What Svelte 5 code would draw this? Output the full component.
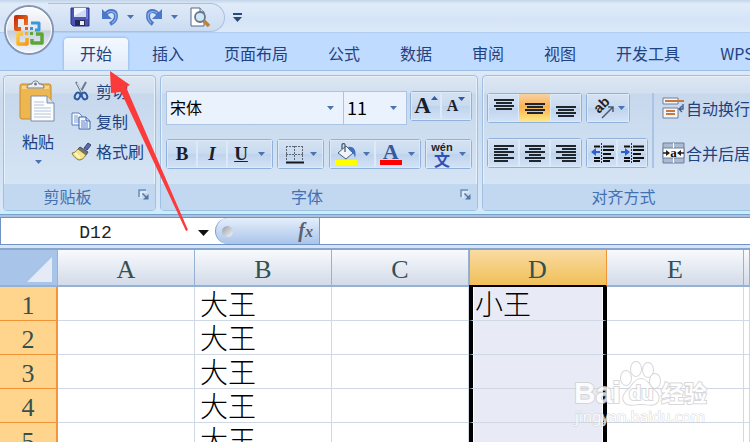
<script>
    let tabs = ["开始", "插入", "页面布局", "公式", "数据", "审阅", "视图", "开发工具", "WPS 云办公"]
    let activeTab = $state("开始")

    let columns = ["A", "B", "C", "D", "E"]
    let rows = [1, 2, 3, 4, 5]
    let cells = { B1: "大王", B2: "大王", B3: "大王", B4: "大王", B5: "大王", D1: "小王" }

    let cellName = $state("D12")
    let formula = $state("")
    let fontName = $state("宋体")
    let fontSize = $state("11")
    let vertical = $state("middle")
</script>

{#snippet arrow()}
    <svg class="arrow" width="7" height="4" viewBox="0 0 7 4" aria-hidden="true"><path d="M0 0h7L3.500 4z" fill="currentColor" /></svg>
{/snippet}

{#snippet launcher()}
    <button class="launcher" aria-label="更多选项">
        <svg width="11" height="11" viewBox="0 0 11 11">
            <path d="M1 8V1h7" fill="none" stroke="#6b8fb8" stroke-width="1.500" />
            <path d="M3 9V3h6" fill="none" stroke="#f4faff" />
            <path d="M4.500 4.500l4 4" stroke="#55779f" stroke-width="1.500" />
            <path d="M10.500 5v5.500H5z" fill="#55779f" />
        </svg>
    </button>
{/snippet}

{#snippet lines(d)}
    <svg width="20" height="18" viewBox="0 0 20 18" aria-hidden="true"><path {d} fill="none" stroke="#20262e" stroke-width="2" /></svg>
{/snippet}

<div class="app">
    <header>
        <div class="titlebar">
            <div class="quick">
                <button aria-label="保存">
                    <svg width="20" height="20" viewBox="0 0 20 20">
                        <path d="M1 1h18v18H3l-2-2z" fill="#4a55b5" stroke="#2b3384" />
                        <path d="M4 1h12v9H4z" fill="#f3f7ff" />
                        <path d="M4 9l12-7v8H4z" fill="#cfdcf5" />
                        <path d="M5 13h10v6H5z" fill="#252a50" />
                        <path d="M10 14h4v4h-4z" fill="#e9eefa" />
                        <path d="M17 2v10" stroke="#8f9be8" />
                    </svg>
                </button>
                <button aria-label="撤消">
                    <svg width="18" height="18" viewBox="0 0 18 18">
                        <path d="M4 7C8 1 15 2 15 8c0 4-2 6-6 8" fill="none" stroke="#4b78c8" stroke-width="4" />
                        <path d="M1 1v10h10z" fill="#4b78c8" />
                        <path d="M6 5c4-3 9-1 9 3 0 3-1 5-4 7" fill="none" stroke="#8fb2e8" stroke-width="1.200" />
                    </svg>
                    {@render arrow()}
                </button>
                <button aria-label="恢复">
                    <svg width="18" height="18" viewBox="0 0 18 18">
                        <path d="M14 7C9 1 3 2 3 8c0 4 2 6 5 8" fill="none" stroke="#4b78c8" stroke-width="4" />
                        <path d="M17 1v10H7z" fill="#4b78c8" />
                        <path d="M12 5C8 2 3 4 3 8c0 3 1 5 3 7" fill="none" stroke="#8fb2e8" stroke-width="1.200" />
                    </svg>
                    {@render arrow()}
                </button>
                <button aria-label="打印预览">
                    <svg width="21" height="21" viewBox="0 0 21 21">
                        <path d="M2 1h9l4 4v14H2z" fill="#fff" stroke="#5b6980" />
                        <path d="M11 1v4h4" fill="#d5dfed" stroke="#5b6980" />
                        <circle cx="11" cy="10" r="5" fill="#cfe6f7" stroke="#66788e" stroke-width="1.800" />
                        <path d="M15 14l5 5" stroke="#c18228" stroke-width="3.500" />
                    </svg>
                </button>
            </div>
            <button class="customize" aria-label="自定义快速访问工具栏">
                <svg width="9" height="9" viewBox="0 0 9 9"><path d="M0 1h9" stroke="#2a4a7d" stroke-width="2" /><path d="M0 4h9L4.500 9z" fill="#2a4a7d" /></svg>
            </button>
        </div>
        <button class="office" aria-label="Office 按钮">
            <svg width="52" height="52" viewBox="0 0 52 52">
                <defs>
                    <linearGradient id="orb" x1="0" y1="0" x2="0" y2="1">
                        <stop offset="0" stop-color="#fdfdfe" />
                        <stop offset="0.500" stop-color="#e1e6ee" />
                        <stop offset="0.520" stop-color="#c3cede" />
                        <stop offset="1" stop-color="#f6faff" />
                    </linearGradient>
                    <linearGradient id="red" x1="0" y1="0" x2="1" y2="1"><stop offset="0" stop-color="#c52f0b" /><stop offset="1" stop-color="#f47a1e" /></linearGradient>
                    <linearGradient id="yellow" x1="0" y1="0" x2="1" y2="1"><stop offset="0" stop-color="#ffca3a" /><stop offset="1" stop-color="#f39a1a" /></linearGradient>
                </defs>
                <circle cx="26" cy="26" r="24" fill="url(#orb)" stroke="#8496b2" stroke-width="2" />
                <circle cx="26" cy="26" r="22.500" fill="none" stroke="#fff" />
                <path d="M18 25h-5V13h10v8" fill="none" stroke="url(#red)" stroke-width="4" stroke-linejoin="round" />
                <path d="M28 19h8v7h-4" fill="none" stroke="#3a98d8" stroke-width="3" stroke-linejoin="round" />
                <path d="M20 30h-5v10h9v-6" fill="none" stroke="url(#yellow)" stroke-width="3.500" stroke-linejoin="round" />
                <path d="M29 35v4h10v-9h-6" fill="none" stroke="#5ea537" stroke-width="3.500" stroke-linejoin="round" />
                <path d="M22 23h3v3h-3z" fill="#ea5a16" />
                <path d="M27 23h3v3h-3z" fill="#3a98d8" />
                <path d="M22 28h3v3h-3z" fill="#f7ad22" />
                <path d="M27 28h3v3h-3z" fill="#5ea537" />
            </svg>
        </button>
        <nav>
            {#each tabs as tab}
                <button class="tab" class:active={tab === activeTab} onclick={() => (activeTab = tab)}>{tab}</button>
            {/each}
        </nav>
    </header>

    <div class="ribbon">
        <section class="group clipboard">
            <div class="body">
                <button class="paste">
                    <svg width="38" height="42" viewBox="0 0 38 42" aria-hidden="true">
                        <rect x="1" y="4" width="31" height="35" rx="2" fill="#eeb64e" stroke="#c48a2c" />
                        <path d="M3 6h27v3H3z" fill="#f9d48a" />
                        <path d="M8 8c0-3 2-4 5-4 0-4 7-4 7 0 3 0 5 1 5 4z" fill="#eceff3" stroke="#737d8b" />
                        <circle cx="16.500" cy="4" r="1.500" fill="#737d8b" />
                        <path d="M12 16h16l7 7v18H12z" fill="#fbfdff" stroke="#7a8ca6" />
                        <path d="M28 16v7h7" fill="#d4deec" stroke="#7a8ca6" />
                        <path d="M15 22h10M15 25h10M15 28h17M15 31h17M15 34h17M15 37h17" stroke="#b5c4da" />
                    </svg>
                    <span>粘贴</span>
                    {@render arrow()}
                </button>
                <div class="stack">
                    <button>
                        <svg width="20" height="20" viewBox="0 0 20 20" aria-hidden="true">
                            <path d="M5 1l6 11M15 1L9 12" stroke="#6c7a8d" stroke-width="2" />
                            <path d="M6 2l5 9" stroke="#e4eaf2" />
                            <ellipse cx="6.500" cy="15" rx="2.500" ry="3.500" fill="none" stroke="#2e58a6" stroke-width="2" transform="rotate(25 6.500 15)" />
                            <ellipse cx="13.500" cy="15" rx="2.500" ry="3.500" fill="none" stroke="#2e58a6" stroke-width="2" transform="rotate(-25 13.500 15)" />
                        </svg>
                        剪切
                    </button>
                    <button>
                        <svg width="20" height="20" viewBox="0 0 20 20" aria-hidden="true">
                            <path d="M1 2h7l3 3v9H1z" fill="#f5f9ff" stroke="#5f7fb8" />
                            <path d="M3 5h4M3 7h5M3 9h5M3 11h5" stroke="#7f9fd2" />
                            <path d="M8 6h7l4 4v8H8z" fill="#f0f6ff" stroke="#3f63a8" />
                            <path d="M15 6v4h4" fill="#bcd1f0" stroke="#3f63a8" />
                            <path d="M10 10h4M10 12h7M10 14h7M10 16h7" stroke="#5f86c8" />
                        </svg>
                        复制
                    </button>
                    <button>
                        <svg width="20" height="20" viewBox="0 0 20 20" aria-hidden="true">
                            <path d="M13 7l4-5 3 2-4 5z" fill="#5b6aa8" stroke="#39456e" />
                            <path d="M9 6l8 5-2 3-8-6z" fill="#6d7585" stroke="#454e5e" />
                            <path d="M7 8l8 6c-2 3-4 5-7 5-3-1-6-4-7-7 3 0 4-2 6-4z" fill="#f6e48c" stroke="#8c7b34" />
                            <path d="M4 12l5 5" stroke="#fff8c9" stroke-width="2" />
                        </svg>
                        格式刷
                    </button>
                </div>
            </div>
            <footer><h2>剪贴板</h2>{@render launcher()}</footer>
        </section>

        <section class="group font">
            <div class="body">
                <div class="row">
                    <div class="combos">
                        <label class="combo name">
                            <select bind:value={fontName} aria-label="字体"><option>宋体</option><option>黑体</option></select>
                            {@render arrow()}
                        </label>
                        <label class="combo size">
                            <select bind:value={fontSize} aria-label="字号"><option>11</option><option>12</option></select>
                            {@render arrow()}
                        </label>
                    </div>
                    <div class="buttons">
                        <button class="w30 letter" aria-label="增大字号"><span class="big">A</span><svg width="7" height="20" viewBox="0 0 7 20"><path d="M0 4l3.500-4L7 4z" fill="#3159a5" /></svg></button>
                        <button class="w30 letter" aria-label="减小字号"><span>A</span><svg width="7" height="20" viewBox="0 0 7 20"><path d="M0 1h7L3.500 5z" fill="#3159a5" /></svg></button>
                    </div>
                </div>
                <div class="row">
                    <div class="buttons">
                        <button class="w30 letter"><b>B</b></button>
                        <button class="w30 letter"><i>I</i></button>
                        <button class="w46 letter"><u>U</u>{@render arrow()}</button>
                    </div>
                    <div class="buttons">
                        <button class="w46" aria-label="边框">
                            <svg width="19" height="19" viewBox="0 0 19 19"><path d="M1 1.500h17M1 9.500h17M1.500 1v15M9.500 1v15M17.500 1v15" stroke="#5c6675" stroke-dasharray="2 1" /><path d="M1 17.500h18" stroke="#14181e" stroke-width="2" /></svg>
                            {@render arrow()}
                        </button>
                    </div>
                    <div class="buttons">
                        <button class="w46" aria-label="填充颜色">
                            <svg width="22" height="22" viewBox="0 0 22 22">
                                <path d="M3 10l8-7 7 7-7 6z" fill="#eef4fb" stroke="#4c5d75" />
                                <path d="M10 9V2c0-2-3-2-3 0v4" fill="none" stroke="#4c5d75" stroke-width="1.300" />
                                <path d="M13 4c6-1 9 4 7 11-1-4-2-6-5-7z" fill="#3c6fc0" />
                                <path d="M0 17h22v5H0z" fill="#ffff00" />
                            </svg>
                            {@render arrow()}
                        </button>
                        <button class="w46" aria-label="字体颜色">
                            <span class="color">A</span>
                            {@render arrow()}
                        </button>
                    </div>
                    <div class="buttons">
                        <button class="w46" aria-label="拼音指南">
                            <span class="pinyin"><span>wén</span><span>文</span></span>
                            {@render arrow()}
                        </button>
                    </div>
                </div>
            </div>
            <footer><h2>字体</h2>{@render launcher()}</footer>
        </section>

        <section class="group align">
            <div class="body">
                <div class="side">
                    <div class="row">
                        <div class="buttons">
                            <button class="w31" class:on={vertical === "top"} aria-label="顶端对齐" onclick={() => (vertical = "top")}>{@render lines("M0 1h20M2 4h16M0 7h20M2 10h16")}</button>
                            <button class="w31" class:on={vertical === "middle"} aria-label="垂直居中" onclick={() => (vertical = "middle")}>{@render lines("M0 5h20M2 8h16M0 11h20M2 14h16")}</button>
                            <button class="w31" class:on={vertical === "bottom"} aria-label="底端对齐" onclick={() => (vertical = "bottom")}>{@render lines("M0 8h20M2 11h16M0 14h20M2 17h16")}</button>
                        </div>
                        <div class="buttons">
                            <button class="w42" aria-label="方向">
                                <svg width="24" height="24" viewBox="0 0 24 24"><text x="7" y="18" transform="rotate(-45 7 18)" font-family="Liberation Sans" font-weight="bold" font-size="14" fill="#222">ab</text><path d="M10 22L21 11M21 16v-5h-5" fill="none" stroke="#4d5b70" stroke-width="1.500" /></svg>
                                {@render arrow()}
                            </button>
                        </div>
                    </div>
                    <div class="row">
                        <div class="buttons">
                            <button class="w31" aria-label="文本左对齐">{@render lines("M0 2h20M0 5h14M0 8h20M0 11h14M0 14h20M0 17h14")}</button>
                            <button class="w31" aria-label="居中">{@render lines("M0 2h20M4 5h12M0 8h20M4 11h12M0 14h20M4 17h12")}</button>
                            <button class="w31" aria-label="文本右对齐">{@render lines("M0 2h20M6 5h14M0 8h20M6 11h14M0 14h20M6 17h14")}</button>
                        </div>
                        <div class="buttons">
                            <button class="w30" aria-label="减少缩进量">
                                <svg width="23" height="20" viewBox="0 0 23 20"><path d="M3 3.500h6M12 3.500h11M12 7h11M12 11h8M3 15h6M12 15h11M3 18h6M12 18h7" stroke="#111" stroke-width="2" /><path d="M10.500 0v20" stroke="#333" stroke-dasharray="2 1" /><path d="M0 9l5-4v3h4v2H5v3z" fill="#2d5fd0" /></svg>
                            </button>
                            <button class="w30" aria-label="增加缩进量">
                                <svg width="23" height="20" viewBox="0 0 23 20"><path d="M3 3.500h6M12 3.500h11M12 7h11M12 11h8M3 15h6M12 15h11M3 18h6M12 18h7" stroke="#111" stroke-width="2" /><path d="M10.500 0v20" stroke="#333" stroke-dasharray="2 1" /><path d="M9 9L4 5v3H0v2h4v3z" fill="#2d5fd0" /></svg>
                            </button>
                        </div>
                    </div>
                </div>
                <div class="side wrap">
                    <button>
                        <svg width="23" height="22" viewBox="0 0 23 22" aria-hidden="true">
                            <path d="M1 1h15v6H1zM1 11h15v10H1z" fill="#f3f6fb" stroke="#6f7f99" />
                            <path d="M3 4h19M4 14h9M4 17h9" stroke="#c7783a" stroke-width="1.800" />
                            <path d="M21 7v5h-3M20 9l-3 3 3 3" fill="none" stroke="#3f5f90" stroke-width="1.400" />
                        </svg>
                        自动换行
                    </button>
                    <button>
                        <svg width="23" height="22" viewBox="0 0 23 22" aria-hidden="true">
                            <path d="M1 1h21v20H1z" fill="#a9bad2" stroke="#6e7f99" />
                            <path d="M1 6h21v10H1z" fill="#fff" stroke="#6e7f99" />
                            <path d="M11.500 1v5M11.500 16v5" stroke="#fff" />
                            <path d="M1 11h6M22 11h-6" stroke="#222" stroke-width="1.500" />
                            <path d="M4 8v6l4-3zM19 8v6l-4-3z" fill="#222" />
                            <text x="11.500" y="15" text-anchor="middle" font-family="Liberation Serif" font-weight="bold" font-size="13" fill="#111">a</text>
                        </svg>
                        合并后居中
                    </button>
                </div>
            </div>
            <footer><h2>对齐方式</h2>{@render launcher()}</footer>
        </section>
    </div>

    <div class="formula-bar">
        <div class="name-box">
            <input bind:value={cellName} aria-label="名称框" />
            <button aria-label="名称列表"><svg width="11" height="6" viewBox="0 0 11 6"><path d="M0 0h11L5.500 6z" fill="#111" /></svg></button>
        </div>
        <div class="fx">
            <span class="knob"></span>
            <button aria-label="插入函数"><i>f</i><i class="x">x</i></button>
        </div>
        <input class="formula" bind:value={formula} aria-label="编辑栏" />
    </div>

    <table>
        <colgroup>
            <col class="row-head" />
            {#each columns as column}<col class="column" class:wide={column === "D"} />{/each}
            <col />
        </colgroup>
        <thead>
            <tr>
                <th class="corner"><svg width="25" height="25" viewBox="0 0 25 25" aria-hidden="true"><path d="M25 0v25H0z" fill="#e4ebf6" /></svg></th>
                {#each columns as column}
                    <th scope="col" class:picked={column === "D"}>{column}</th>
                {/each}
                <th></th>
            </tr>
        </thead>
        <tbody>
            {#each rows as row}
                <tr>
                    <th scope="row">{row}</th>
                    {#each columns as column}
                        <td class:selected={column === "D"}>{cells[column + row] ?? ""}</td>
                    {/each}
                    <td></td>
                </tr>
            {/each}
        </tbody>
    </table>

    <svg class="pointer" width="84" height="164" viewBox="0 0 84 164" aria-hidden="true">
        <path d="M3 2l20 14-4 2 62 143-2 1L14 23l-10 1z" fill="#fb3b3b" />
    </svg>

    <svg class="watermark" width="140" height="70" viewBox="0 0 140 70">
        <g fill="#fff" stroke="#cfcfd2" stroke-width="2" paint-order="stroke" font-family="Liberation Sans, Noto Sans CJK SC, sans-serif">
            <text x="4" y="43" font-size="30" font-weight="bold">Bai</text>
            <ellipse cx="56" cy="18" rx="5" ry="7" />
            <ellipse cx="66" cy="9" rx="5" ry="7" />
            <ellipse cx="78" cy="10" rx="5" ry="7" />
            <ellipse cx="85" cy="21" rx="5" ry="7" />
            <path d="M71 19c6 0 8 6 12 10 5 4 7 8 5 12-3 6-11 3-17 3s-14 3-17-3c-2-4 1-9 5-12 4-4 6-10 12-10z" />
            <text x="59" y="40" font-size="20" font-weight="bold">du</text>
            <text x="91" y="42" font-size="23" font-weight="bold">经验</text>
        </g>
        <text x="5" y="62" font-family="Noto Sans, sans-serif" font-size="15" fill="#fff" stroke="#cfcfd2" paint-order="stroke">jingyan.baidu.com</text>
    </svg>
</div>

<style>
    :global(body) {
        margin: 0;
        overflow: hidden;
    }

    .app {
        position: relative;
        height: 100vh;
        overflow: hidden;
        background: white;
        color: #1f4282;
        font-family: "Noto Sans CJK SC", "Noto Sans", sans-serif;
        font-size: 16px;
        line-height: 20px;
    }

    button, input, select {
        box-sizing: border-box;
        margin: 0;
        padding: 0;
        border: 0;
        background: none;
        color: inherit;
        font: inherit;
        white-space: nowrap;
    }

    svg {
        display: block;
        flex: none;
    }

    .arrow {
        color: #4a74b0;
    }

    /* title bar and tabs */
    header {
        position: relative;
        background: #bfdbff;
    }

    .titlebar {
        display: flex;
        align-items: center;
        height: 33px;
        padding: 2px 0 0 48px;
        background: linear-gradient(#c3d4ea, #e1ecf9 4px, #d5e4f6 60%, #dce9f9);
        border-bottom: 1px solid #b3cdee;
        box-sizing: border-box;
    }

    .quick {
        display: flex;
        align-items: center;
        gap: 11px;
        box-sizing: border-box;
        height: 29px;
        padding: 0 14px 0 22px;
        border: 1px solid #a9c1e0;
        border-left: 0;
        border-radius: 0 15px 15px 0;
        background: linear-gradient(#dfeaf8, #cbdcf2);
    }

    .quick button {
        display: flex;
        align-items: center;
        gap: 8px;
    }

    .customize {
        padding: 4px 8px;
    }

    .office {
        position: absolute;
        top: 4px;
        left: 3px;
    }

    nav {
        display: flex;
        height: 37px;
        padding: 5px 0 0 60px;
        box-sizing: border-box;
    }

    .tab {
        flex: none;
        margin: 0 4px;
        padding: 0 16px 2px;
        border-radius: 4px 4px 0 0;
    }

    .tab.active {
        background: linear-gradient(#f4f9ff, #dfeaf8);
        box-shadow: 0 0 2px 1px #9cc0ec;
        clip-path: inset(-3px -3px 0 -3px);
    }

    /* ribbon */
    .ribbon {
        display: flex;
        gap: 4px;
        padding: 4px 0 0 3px;
        overflow: hidden;
        background: linear-gradient(#dfe9f6, #c9daee 30px, #d8e8f8);
        border-top: 1px solid #9dbfe8;
        border-bottom: 3px solid #c3f1f9;
    }

    .group {
        flex: none;
        box-sizing: border-box;
        border: 1px solid #9fbfe3;
        border-radius: 4px;
        overflow: hidden;
        background: linear-gradient(#dde7f3, #d2dfef 17px, #c7d8ed 18px, #d9e8f7);
        box-shadow: inset 0 0 0 1px #e6f0fb;
    }

    .clipboard {
        width: 153px;
    }

    .font {
        width: 318px;
    }

    .align {
        width: 288px;
    }

    .body {
        box-sizing: border-box;
        height: 108px;
    }

    footer {
        display: flex;
        align-items: center;
        height: 26px;
        background: #c1d8f0;
        color: #4570b0;
    }

    h2 {
        flex: 1;
        margin: 0;
        padding: 0 0 2px 14px;
        font-size: 16px;
        font-weight: normal;
        line-height: 22px;
        text-align: center;
    }

    .clipboard h2, .font h2 {
        padding: 0 5px 2px 0;
    }

    .launcher {
        padding: 0 6px 6px 2px;
    }

    .clipboard .body {
        display: flex;
        gap: 14px;
        padding: 4px 0 0 15px;
    }

    .paste {
        display: flex;
        flex-direction: column;
        align-items: center;
        align-self: start;
        gap: 9px;
    }

    .stack {
        display: flex;
        flex-direction: column;
        margin-top: -4px;
    }

    .stack button {
        display: flex;
        align-items: center;
        gap: 5px;
        height: 30px;
    }

    .font .body {
        display: flex;
        flex-direction: column;
        gap: 14px;
        padding: 15px 5px 0 5px;
    }

    .row {
        display: flex;
        align-items: start;
        justify-content: space-between;
    }

    .combos {
        display: flex;
    }

    .combo {
        display: grid;
        grid-template-columns: 1fr 16px;
        align-items: center;
        box-sizing: border-box;
        height: 34px;
        border: 1px solid #abc4e4;
        background: #eaf2fd;
        color: black;
    }

    .combo select {
        grid-area: 1 / 1 / 2 / 3;
        height: 32px;
        padding: 0 0 2px 3px;
        appearance: none;
        outline: none;
    }

    .combo .arrow {
        grid-area: 1 / 2;
        pointer-events: none;
    }

    .name {
        width: 178px;
    }

    .size {
        width: 63px;
        border-left: 0;
    }

    .size select {
        font-size: 18px;
    }

    .buttons {
        display: flex;
        flex: none;
        box-sizing: border-box;
        height: 30px;
        border: 1px solid #90b1dc;
        border-radius: 3px;
        background: linear-gradient(#d5e2f3, #c9daef 50%, #bfd3ed 51%, #d3e3f7);
    }

    .buttons button {
        display: flex;
        align-items: center;
        justify-content: center;
        gap: 6px;
        box-shadow: inset 0 0 0 1px #dce9f8;
    }

    .w30 {
        width: 30px;
    }

    .w31 {
        width: 31px;
    }

    .w42 {
        width: 42px;
    }

    .buttons .w42 {
        gap: 2px;
    }

    .w46 {
        width: 45px;
    }

    .font .w46 {
        flex: none;
    }

    .buttons .on {
        background: linear-gradient(#f5d2a3, #fbb253 45%, #fbc15a 60%, #fdea8c);
        box-shadow: none;
    }

    .buttons .letter {
        color: #1b1f27;
        font-family: "Liberation Serif", serif;
        font-size: 16px;
        font-weight: bold;
    }

    .letter.w46 {
        gap: 10px;
    }

    .buttons .w30.letter {
        gap: 0;
    }

    .letter .big {
        font-size: 23px;
    }

    .letter b, .letter i, .letter u {
        font-size: 19px;
    }

    .color {
        width: 22px;
        height: 22px;
        box-sizing: border-box;
        border-bottom: 5px solid red;
        color: #34599c;
        font-family: "Liberation Serif", serif;
        font-size: 22px;
        font-weight: bold;
        line-height: 17px;
    }

    .pinyin {
        display: flex;
        flex-direction: column;
        align-items: center;
        color: #2f50b8;
        font-size: 16px;
        font-weight: bold;
        line-height: 14px;
    }

    .pinyin span:first-child {
        color: #222;
        font-family: "Liberation Sans", sans-serif;
        font-size: 11px;
        line-height: 10px;
    }

    .align .body {
        display: flex;
        gap: 4px;
        padding: 17px 0 0 4px;
    }

    .side {
        display: flex;
        flex-direction: column;
        gap: 15px;
    }

    .side .row {
        justify-content: start;
        gap: 4px;
    }

    .wrap {
        height: 75px;
        padding-left: 8px;
        border-left: 2px solid #a9c4e6;
    }

    .wrap button {
        display: flex;
        align-items: center;
        gap: 1px;
        height: 30px;
    }

    /* formula bar */
    .formula-bar {
        display: flex;
        height: 28px;
        margin-top: 3px;
        background: white;
        border-top: 1px solid #6f93c4;
        border-bottom: 1px solid #6f93c4;
        box-sizing: border-box;
        box-shadow: 0 -2px #a9c0df, 0 -3px #7f9fcb;
    }

    .name-box {
        display: flex;
        width: 215px;
        border-left: 1px solid #6f93c4;
        box-sizing: border-box;
    }

    .name-box input {
        flex: 1;
        min-width: 0;
        padding-top: 3px;
        color: #222;
        font-family: "Liberation Mono", monospace;
        font-size: 18px;
        text-align: center;
    }

    .name-box button {
        padding: 3px 6px 0 8px;
    }

    .fx {
        display: flex;
        align-items: center;
        justify-content: space-between;
        width: 105px;
        padding: 0 6px;
        box-sizing: border-box;
        border: 1px solid #7c9fce;
        border-width: 0 1px;
        border-radius: 13px 0 0 13px;
        background: linear-gradient(#e5effb, #a9c4ea);
    }

    .knob {
        width: 11px;
        height: 11px;
        border-radius: 50%;
        background: linear-gradient(135deg, #989da8, #f4f6f9);
    }

    .fx button {
        color: #5a6270;
        font-family: "Liberation Serif", serif;
        font-size: 20px;
        font-weight: bold;
    }

    .fx .x {
        font-size: 16px;
    }

    .formula {
        flex: 1;
        min-width: 0;
        padding: 0 6px;
        color: black;
    }

    /* sheet */
    table {
        width: 100%;
        margin-top: 3px;
        table-layout: fixed;
        border-collapse: separate;
        border-spacing: 0;
        border-top: 2px solid #86a6cf;
        box-shadow: 0 -3px #d8e4f5;
        font-family: "Liberation Serif", "Noto Sans CJK SC", serif;
    }

    .row-head {
        width: 58px;
    }

    .column {
        width: 137px;
    }

    .wide {
        width: 138px;
    }

    th, td {
        box-sizing: border-box;
        height: 34px;
        padding: 4px 0 0;
        line-height: 29px;
        white-space: nowrap;
    }

    th {
        color: #34504f;
        font-size: 26px;
        font-weight: normal;
    }

    thead th {
        height: 37px;
        border-right: 1px solid #95b1d4;
        border-bottom: 2px solid #95b1d4;
        background: linear-gradient(#f8fafc, #d3dbe9);
    }

    thead .corner {
        padding: 4px 5px 0 0;
        background: #a9c4e9;
    }

    .corner svg {
        margin-left: auto;
    }

    thead .picked {
        border-right-color: #f29536;
        border-bottom: 2px solid black;
        background: linear-gradient(#fadba2, #f0bf58);
        box-shadow: inset 1px 0 #f29536;
    }

    tbody th {
        border-right: 2px solid #f29536;
        border-bottom: 1px solid #f29536;
        background: #ffd58d;
    }

    td {
        padding-left: 5px;
        border-right: 1px solid #d0d7e5;
        border-bottom: 1px solid #d0d7e5;
        color: black;
        font-size: 28px;
        font-weight: 300;
    }

    td.selected {
        border-right: 4px solid black;
        border-left: 4px solid black;
        padding-left: 2px;
        background: #e8ebf5;
        box-shadow: inset 1px 0 white, inset -1px 0 white;
    }

    /* things drawn over the window */
    .pointer {
        position: absolute;
        top: 69px;
        left: 107px;
        pointer-events: none;
    }

    .watermark {
        position: absolute;
        right: 40px;
        bottom: 12px;
        pointer-events: none;
        opacity: 0.8;
    }
</style>
